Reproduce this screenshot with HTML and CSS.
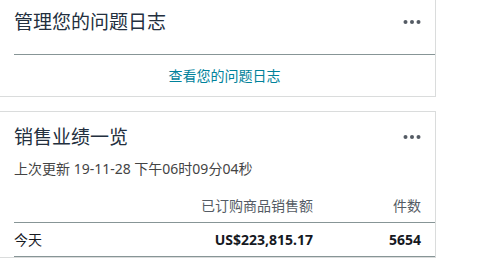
FILE: index.html
```html
<!DOCTYPE html>
<html lang="zh-CN">
<head>
    <meta charset="UTF-8">
    <title>Seller Central</title>
    <link rel="stylesheet" href="styles.css">
</head>
<body>

<div class="cards">
    <div class="card card-issues">
        <div class="card-header">
            <h2 class="card-title">管理您的问题日志</h2>
            <button class="more-btn" aria-label="更多">
                <svg width="18" height="6" viewBox="0 0 18 6"><circle cx="2.5" cy="3" r="2"/><circle cx="9" cy="3" r="2"/><circle cx="15.5" cy="3" r="2"/></svg>
            </button>
        </div>
        <div class="card-footer">
            <a href="#" class="card-link">查看您的问题日志</a>
        </div>
    </div>

    <div class="card card-sales">
        <div class="card-header">
            <h2 class="card-title">销售业绩一览</h2>
            <button class="more-btn" aria-label="更多">
                <svg width="18" height="6" viewBox="0 0 18 6"><circle cx="2.5" cy="3" r="2"/><circle cx="9" cy="3" r="2"/><circle cx="15.5" cy="3" r="2"/></svg>
            </button>
        </div>
        <p class="updated">上次更新 19-11-28 下午06时09分04秒</p>

        <div class="sales-table">
            <div class="sales-row sales-head">
                <span></span>
                <span class="num">已订购商品销售额</span>
                <span class="num last">件数</span>
            </div>
            <div class="sales-row">
                <span>今天</span>
                <span class="num strong">US$223,815.17</span>
                <span class="num last strong">5654</span>
            </div>
        </div>
    </div>
</div>

</body>
</html>
```

FILE: styles.css
```css
body {
    margin: 0;
    background: #fff;
    font-family: "Noto Sans", "Noto Sans CJK SC", sans-serif;
    color: #16191f;
}
.cards {
    width: 437px;
    margin: -1px 0 0 -1px;
}
.card {
    background: #fff;
    border: 1px solid #dadcdc;
}
.card + .card {
    margin-top: 14px;
}
.card-header {
    display: flex;
    justify-content: space-between;
    align-items: center;
    padding: 0 14px;
}
.card-title {
    margin: 0;
    font-size: 19px;
    font-weight: normal;
    line-height: 24px;
    color: #232f3e;
}
.more-btn {
    background: none;
    border: none;
    padding: 0;
    line-height: 0;
    fill: #545b64;
    cursor: pointer;
}
.card-issues .card-header {
    padding-top: 10px;
    padding-bottom: 20px;
    margin-left: 14px;
    padding-left: 0;
    border-bottom: 1px solid #879596;
}
.card-footer {
    padding-left: 14px;
    text-align: center;
    line-height: 40px;
}
.card-link {
    font-size: 14px;
    color: #00829b;
    text-decoration: none;
}
.card-sales .card-header {
    padding-top: 13px;
}
.updated {
    margin: 10px 14px 0;
    font-size: 14px;
    line-height: 20px;
    color: #444;
}
.sales-table {
    margin-left: 14px;
}
.sales-row {
    display: grid;
    grid-template-columns: 1fr auto 122px;
    font-size: 14px;
    line-height: 20px;
    padding: 7px 0 6px;
    border-bottom: 1px solid #879596;
}
.sales-head {
    padding: 17px 0 6px;
    color: #545b64;
}
.num {
    text-align: right;
}
.last {
    padding-right: 14px;
}
.strong {
    font-weight: bold;
}
```
